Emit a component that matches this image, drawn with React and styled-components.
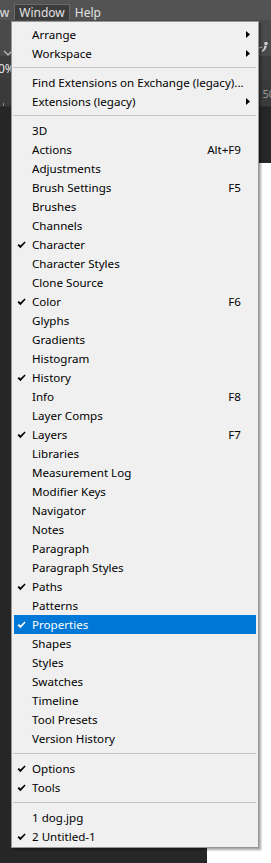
import React from "react";
import styled, { createGlobalStyle } from "styled-components";

const GlobalStyle = createGlobalStyle`
  html, body { margin: 0; padding: 0; background: #262626; overflow: hidden; }
  #root { width: 271px; height: 863px; }
`;

const FONT = `"Segoe UI", "Noto Sans", "Liberation Sans", sans-serif`;

const Page = styled.div`
  position: relative;
  width: 271px;
  height: 863px;
  display: flex;
  flex-direction: column;
  overflow: hidden;
  font-family: ${FONT};
`;

const MenuBar = styled.div`
  height: 20px;
  background: #535353;
  display: flex;
  align-items: flex-end;
  font-size: 12px;
  color: #e2e2e2;
`;

const MenuBarItem = styled.div`
  height: 16px;
  box-sizing: border-box;
  padding: 0 4px;
  display: flex;
  align-items: center;
  margin-left: ${(p) => p.$offset || 0}px;
  background: ${(p) => (p.$active ? "#3c3c3c" : "transparent")};
  border: 1px solid ${(p) => (p.$active ? "#6a6a6a" : "transparent")};
  border-bottom: none;
`;

const OptionsBar = styled.div`
  height: 36px;
  background: #4a4a4a;
  border-bottom: 1px solid #3a3a3a;
  display: flex;
  justify-content: space-between;
  align-items: flex-start;
  padding: 0 0 0 3px;
  color: #bdbdbd;
`;

const Chevron = styled.div`
  margin-top: 19px;
  width: 10px;
  height: 6px;
`;

const OptIcon = styled.div`
  margin-top: 16px;
  margin-right: 1px;
  width: 12px;
  height: 12px;
`;

const TabBar = styled.div`
  height: 22px;
  background: #3d3d3d;
  display: flex;
  align-items: center;
  font-size: 12px;
  color: #e6e6e6;
`;

const TabText = styled.span`
  margin-left: -2px;
`;

const Ruler = styled.div`
  height: 27px;
  background: #3a3a3a;
  border-bottom: 1px solid #2e2e2e;
  display: flex;
  justify-content: space-between;
  align-items: flex-end;
  color: #9a9a9a;
  font-size: 11px;
`;

const RulerMarks = styled.div`
  display: flex;
  align-items: flex-end;
  gap: 7px;
  height: 14px;
  padding-left: 3px;
`;

const Tick = styled.div`
  width: 1px;
  height: ${(p) => p.$h}px;
  background: #8a8a8a;
`;

const RulerLabel = styled.span`
  margin-bottom: 5px;
  margin-right: -4px;
`;

const Workspace = styled.div`
  flex: 1;
  background: #262626;
  display: flex;
  padding-top: 56px;
  padding-left: 207px;
`;

const Canvas = styled.div`
  flex: 1;
  background: #ffffff;
`;

const Menu = styled.div`
  position: absolute;
  left: 11px;
  top: 21px;
  width: 248px;
  box-sizing: border-box;
  background: #f0f0f0;
  border: 1px solid #979797;
  box-shadow: 2px 2px 2px rgba(0, 0, 0, 0.35);
  padding: 3px 0 1px;
  display: flex;
  flex-direction: column;
  font-size: 11.6px;
  color: #000;
`;

const Item = styled.div`
  position: relative;
  height: 19px;
  margin: 0 2px;
  display: flex;
  align-items: center;
  padding-left: 18px;
  padding-right: 15px;
  background: ${(p) => (p.$selected ? "#0078d7" : "transparent")};
  color: ${(p) => (p.$selected ? "#ffffff" : "#000000")};
  white-space: nowrap;
`;

const Label = styled.span`
  flex: 1;
`;

const Shortcut = styled.span``;

const Check = styled.svg`
  position: absolute;
  left: 3px;
  top: 6px;
`;

const Arrow = styled.svg`
  position: absolute;
  right: 6px;
  top: 6px;
`;

const Separator = styled.div`
  height: ${(p) => p.$h}px;
  display: flex;
  align-items: center;
  margin: 0 2px 0 1px;
  &::after {
    content: "";
    flex: 1;
    height: 1px;
    background: #c4c4c4;
    margin-top: -1px;
  }
`;

const items = [
  { label: "Arrange", sub: true },
  { label: "Workspace", sub: true },
  { sep: 10 },
  { label: "Find Extensions on Exchange (legacy)..." },
  { label: "Extensions (legacy)", sub: true },
  { sep: 10 },
  { label: "3D" },
  { label: "Actions", key: "Alt+F9" },
  { label: "Adjustments" },
  { label: "Brush Settings", key: "F5" },
  { label: "Brushes" },
  { label: "Channels" },
  { label: "Character", checked: true },
  { label: "Character Styles" },
  { label: "Clone Source" },
  { label: "Color", checked: true, key: "F6" },
  { label: "Glyphs" },
  { label: "Gradients" },
  { label: "Histogram" },
  { label: "History", checked: true },
  { label: "Info", key: "F8" },
  { label: "Layer Comps" },
  { label: "Layers", checked: true, key: "F7" },
  { label: "Libraries" },
  { label: "Measurement Log" },
  { label: "Modifier Keys" },
  { label: "Navigator" },
  { label: "Notes" },
  { label: "Paragraph" },
  { label: "Paragraph Styles" },
  { label: "Paths", checked: true },
  { label: "Patterns" },
  { label: "Properties", checked: true, selected: true },
  { label: "Shapes" },
  { label: "Styles" },
  { label: "Swatches" },
  { label: "Timeline" },
  { label: "Tool Presets" },
  { label: "Version History" },
  { sep: 11 },
  { label: "Options", checked: true },
  { label: "Tools", checked: true },
  { sep: 11 },
  { label: "1 dog.jpg" },
  { label: "2 Untitled-1", checked: true },
];

function CheckIcon({ color }) {
  return (
    <Check width="9" height="8" viewBox="0 0 9 8">
      <path d="M0.5 4.2 L2 2.9 L3.4 4.6 L7.6 0.5 L8.6 1.6 L3.4 7.2 Z" fill={color} />
    </Check>
  );
}

function ArrowIcon({ color }) {
  return (
    <Arrow width="4" height="7" viewBox="0 0 4 7">
      <path d="M0 0 L4 3.5 L0 7 Z" fill={color} />
    </Arrow>
  );
}

export default function App() {
  const ticks = [3, 3, 6, 3, 3, 3, 3, 6, 3, 3];
  return (
    <>
      <GlobalStyle />
      <Page>
        <MenuBar>
          <MenuBarItem $offset={-22}>View</MenuBarItem>
          <MenuBarItem $active>Window</MenuBarItem>
          <MenuBarItem>Help</MenuBarItem>
        </MenuBar>
        <OptionsBar>
          <Chevron>
            <svg width="10" height="6" viewBox="0 0 10 6">
              <path d="M1 1 L5 5 L9 1" stroke="#bdbdbd" strokeWidth="1.2" fill="none" />
            </svg>
          </Chevron>
          <OptIcon>
            <svg width="12" height="12" viewBox="0 0 12 12">
              <circle cx="8" cy="2.5" r="1.8" fill="#d0d0d0" />
              <path d="M6.5 4.5 L9 5 L7 9 L4 11 L3.5 10 L5.5 8 Z" fill="#d0d0d0" />
              <path d="M1 7 L4 6" stroke="#d0d0d0" strokeWidth="1" />
            </svg>
          </OptIcon>
        </OptionsBar>
        <TabBar>
          <TabText>0%</TabText>
        </TabBar>
        <Ruler>
          <RulerMarks>
            {ticks.map((h, i) => (
              <Tick key={i} $h={h} />
            ))}
          </RulerMarks>
          <RulerLabel>50</RulerLabel>
        </Ruler>
        <Workspace>
          <Canvas />
        </Workspace>
        <Menu>
          {items.map((it, i) =>
            it.sep ? (
              <Separator key={i} $h={it.sep} />
            ) : (
              <Item key={i} $selected={it.selected}>
                {it.checked && <CheckIcon color={it.selected ? "#fff" : "#000"} />}
                <Label>{it.label}</Label>
                {it.key && <Shortcut>{it.key}</Shortcut>}
                {it.sub && <ArrowIcon color={it.selected ? "#fff" : "#000"} />}
              </Item>
            )
          )}
        </Menu>
      </Page>
    </>
  );
}
